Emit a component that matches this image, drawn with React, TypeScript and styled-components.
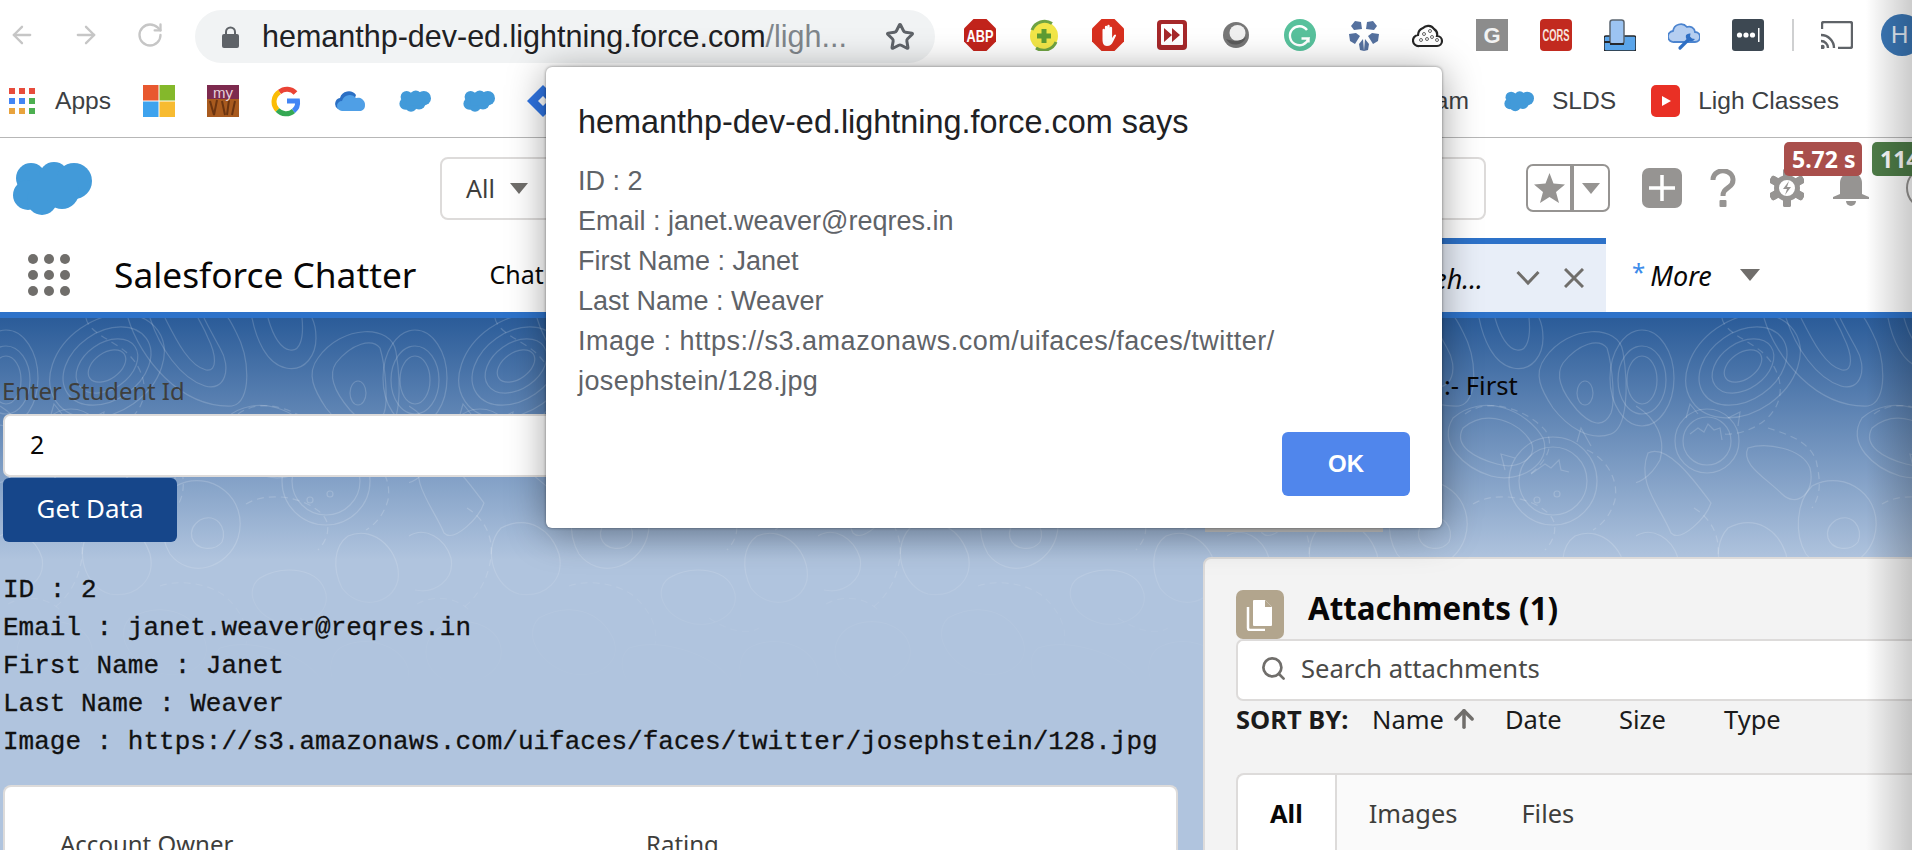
import React from 'react';
import styled, { createGlobalStyle } from 'styled-components';
import { ArrowLeft, ArrowRight, RotateCw, Star, Search, ArrowUp } from 'lucide-react';

const SF_FONT = '"Noto Sans", "Open Sans", sans-serif';
const CHROME_FONT = '"Liberation Sans", Arial, sans-serif';

const GlobalStyle = createGlobalStyle`
  html, body {
    margin: 0;
    padding: 0;
    background: #fff;
    overflow: hidden;
  }
  * {
    box-sizing: border-box;
  }
  svg {
    flex: none;
  }
`;

const Shell = styled.div`
  position: relative;
  width: 1912px;
  height: 850px;
  overflow: hidden;
  display: flex;
  flex-direction: column;
  background: #fff;
  font-family: ${SF_FONT};
`;

/* browser toolbar */
const Toolbar = styled.div`
  height: 70px;
  flex: none;
  display: flex;
  align-items: center;
  padding-left: 8px;
  color: #c6c6c6;
`;

const NavArrows = styled.div`
  display: flex;
  flex: none;
  gap: 36px;
`;

const Omnibox = styled.div`
  width: 740px;
  height: 53px;
  flex: none;
  margin-left: 31px;
  margin-top: 3px;
  border-radius: 27px;
  background: #f1f3f4;
  display: flex;
  align-items: center;
  padding: 0 20px 0 27px;
  color: #5f6368;
  font-family: ${CHROME_FONT};
`;

const Url = styled.span`
  margin-left: 23px;
  font-size: 30.5px;
  color: #202124;
  flex: 1;
  white-space: nowrap;
`;

const UrlRest = styled.span`
  color: #80868b;
`;

const Extensions = styled.div`
  display: flex;
  flex: none;
  gap: 32px;
  margin-left: 29px;
`;

const ToolbarSep = styled.div`
  width: 2px;
  height: 32px;
  flex: none;
  margin-left: 28px;
  background: #cfd0d1;
`;

const CastWrap = styled.div`
  margin-left: 27px;
  flex: none;
  display: flex;
`;

const ProfileBubble = styled.div`
  width: 42px;
  height: 42px;
  margin-left: 28px;
  flex: none;
  border-radius: 50%;
  background: #3b78b8;
  color: #e8f0fa;
  font-family: ${CHROME_FONT};
  font-size: 24px;
  display: flex;
  align-items: center;
  padding-left: 10px;
`;

/* bookmarks */
const Bookmarks = styled.div`
  height: 68px;
  flex: none;
  display: flex;
  align-items: center;
  padding: 0 73px 6px 9px;
  border-bottom: 1px solid #b7b7b7;
  font-family: ${CHROME_FONT};
  font-size: 24.6px;
  color: #3c4043;
`;

const BookmarkGroup = styled.div`
  display: flex;
  align-items: center;
  gap: 32px;
`;

const AppsLink = styled.div`
  display: flex;
  align-items: center;
  gap: 20px;
`;

const BookmarkRight = styled.div`
  margin-left: auto;
  display: flex;
  align-items: center;
  gap: 18px;
`;

const BookmarkLabel = styled.span<{ $after?: number }>`
  margin-right: ${p => p.$after ?? 0}px;
`;

/* salesforce global header */
const GlobalHeader = styled.div`
  height: 100px;
  flex: none;
  display: flex;
  align-items: center;
  padding-left: 12px;
`;

const GlobalSearch = styled.div`
  width: 1046px;
  height: 63px;
  flex: none;
  margin-left: 348px;
  border: 2px solid #dddbda;
  border-radius: 8px;
  display: flex;
  align-items: center;
  padding-left: 24px;
  font-size: 25px;
  color: #3e3e3c;
  gap: 15px;
`;

const Caret = styled.div<{ $w: number; $color?: string }>`
  width: 0;
  height: 0;
  border-left: ${p => p.$w / 2}px solid transparent;
  border-right: ${p => p.$w / 2}px solid transparent;
  border-top: ${p => p.$w * 0.62}px solid ${p => p.$color ?? '#706e6b'};
`;

const FavoriteGroup = styled.div`
  width: 84px;
  height: 48px;
  flex: none;
  margin-left: 40px;
  border: 2px solid #969492;
  border-radius: 7px;
  display: flex;
  align-items: center;
`;

const FavoriteStar = styled.div`
  width: 46px;
  height: 100%;
  display: flex;
  align-items: center;
  justify-content: center;
  border-right: 4px solid #969492;
`;

const FavoriteCaret = styled.div`
  flex: 1;
  display: flex;
  justify-content: center;
`;

const HeaderIcons = styled.div`
  display: flex;
  flex: none;
  align-items: center;
  margin-left: 32px;
`;

const HeaderIcon = styled.div<{ $after: number }>`
  display: flex;
  flex: none;
  margin-right: ${p => p.$after}px;
`;

const UserCircle = styled.div`
  width: 44px;
  height: 44px;
  flex: none;
  border-radius: 50%;
  border: 2px solid #969492;
`;

const PerfBadge = styled.div<{ $left: number; $bg: string; $w: number }>`
  position: absolute;
  top: 142px;
  left: ${p => p.$left}px;
  width: ${p => p.$w}px;
  height: 34px;
  border-radius: 5px;
  background: ${p => p.$bg};
  color: #fff;
  font-size: 23px;
  font-weight: 700;
  line-height: 34px;
  padding-left: 8px;
  white-space: nowrap;
  overflow: hidden;
`;

/* app nav */
const AppNav = styled.div`
  height: 80px;
  flex: none;
  display: flex;
  border-bottom: 6px solid #2d72c9;
  padding-left: 28px;
`;

const Waffle = styled.div`
  width: 42px;
  height: 42px;
  margin-top: 16px;
  display: grid;
  grid-template-columns: repeat(3, 10px);
  grid-auto-rows: 10px;
  justify-content: space-between;
  align-content: space-between;
`;

const WaffleDot = styled.span`
  border-radius: 50%;
  background: #706e6b;
`;

const AppName = styled.div`
  margin-left: 44px;
  font-size: 35.3px;
  line-height: 72px;
  color: #080707;
  white-space: nowrap;
`;

const NavLink = styled.div`
  margin-left: 73px;
  font-size: 25px;
  line-height: 72px;
  color: #080707;
  flex: 1;
`;

const ActiveTab = styled.div`
  width: 206px;
  flex: none;
  border-top: 6px solid #2d72c9;
  background: #e8eef8;
  display: flex;
  align-items: center;
  font-size: 27px;
  font-style: italic;
  color: #080707;
`;

const TabText = styled.span`
  width: 83px;
  text-align: right;
  white-space: nowrap;
`;

const TabActions = styled.div`
  display: flex;
  align-items: center;
  margin-left: 33px;
  gap: 24px;
`;

const MoreTab = styled.div`
  width: 306px;
  flex: none;
  display: flex;
  align-items: center;
  padding-left: 26px;
  font-size: 27px;
  font-style: italic;
  color: #080707;
`;

const MoreStar = styled.span`
  color: #3b8bea;
  font-size: 24px;
  margin-right: 5px;
  margin-top: -8px;
  font-style: normal;
`;

const MoreCaret = styled.div`
  margin-left: 28px;
`;

/* page */
const Page = styled.div`
  position: relative;
  flex: 1;
  min-height: 0;
  display: grid;
  grid-template-columns: 1182px 1fr;
  background: linear-gradient(180deg, #2b5c99 0, #b0c4de 242px, #b0c4de 100%);
`;

const Contours = styled.svg`
  position: absolute;
  left: 0;
  top: 0;
  width: 100%;
  height: 400px;
  -webkit-mask-image: linear-gradient(180deg, #000 0, #000 230px, rgba(0, 0, 0, 0.35) 290px, transparent 390px);
  mask-image: linear-gradient(180deg, #000 0, #000 230px, rgba(0, 0, 0, 0.35) 290px, transparent 390px);
`;

const LeftColumn = styled.div`
  position: relative;
  padding: 58px 4px 0 3px;
  min-width: 0;
`;

const FieldLabel = styled.div`
  font-size: 23.8px;
  line-height: 30px;
  margin-left: -1px;
  color: #3e3e3c;
`;

const StudentInput = styled.div`
  height: 63px;
  width: 1000px;
  margin-top: 8px;
  border: 2px solid #dddbda;
  border-radius: 7px;
  background: #fff;
  padding-left: 25px;
  font-size: 25px;
  line-height: 57px;
  color: #080707;
`;

const GetDataButton = styled.div`
  width: 174px;
  height: 64px;
  margin-top: 1px;
  border-radius: 6px;
  background: #16468a;
  color: #fff;
  font-size: 25.9px;
  line-height: 60px;
  text-align: center;
`;

const ResultBlock = styled.div`
  margin-top: 29px;
  font-family: "Liberation Mono", "Courier New", monospace;
  font-size: 26px;
  line-height: 38px;
  color: #111;
  -webkit-text-stroke: 0.3px #111;
`;

const ResultLine = styled.div`
  white-space: nowrap;
`;

const AccountCard = styled.div`
  margin-top: 24px;
  height: 300px;
  border: 2px solid #dddbda;
  border-bottom: none;
  border-radius: 8px 8px 0 0;
  background: #fff;
  padding: 40px 55px 0;
  display: grid;
  grid-template-columns: 586px 1fr;
  font-size: 24px;
  line-height: 34px;
  color: #3e3e3c;
`;

const RightColumn = styled.div`
  position: relative;
  padding: 53px 0 0 21px;
  min-width: 0;
`;

const FieldHint = styled.div`
  margin-left: 241px;
  font-size: 25.6px;
  line-height: 30px;
  color: #080707;
`;

const GhostBox = styled.div`
  width: 178px;
  height: 62px;
  margin: 69px 0 0 2px;
  border-bottom: 4px solid #c4c4c4;
`;

const AttachmentsPanel = styled.div`
  margin-top: 25px;
  width: 760px;
  height: 300px;
  border: 2px solid #dddbda;
  border-radius: 8px 0 0 0;
  background: #f3f3f3;
  padding: 31px 0 0 31px;
`;

const PanelHeader = styled.div`
  display: flex;
  align-items: flex-start;
  gap: 24px;
`;

const FileBadge = styled.div`
  width: 48px;
  height: 49px;
  border-radius: 7px;
  background: #b2a58d;
  display: flex;
  align-items: center;
  justify-content: center;
`;

const PanelTitle = styled.div`
  font-size: 31.3px;
  font-weight: 700;
  line-height: 36px;
  color: #080707;
`;

const AttachmentSearch = styled.div`
  height: 62px;
  border: 2px solid #dddbda;
  border-right: none;
  border-radius: 7px 0 0 7px;
  background: #fff;
  display: flex;
  align-items: center;
  gap: 14px;
  padding: 0 0 3px 22px;
  font-size: 25.6px;
  color: #4a4a48;
`;

const SortRow = styled.div`
  height: 40px;
  display: flex;
  align-items: center;
  padding-bottom: 4px;
  font-size: 25.5px;
  color: #1b1b1b;
`;

const SortLabel = styled.span`
  font-weight: 700;
  width: 136px;
`;

const SortOption = styled.span<{ $w: number }>`
  width: ${p => p.$w}px;
  display: flex;
  align-items: center;
  gap: 6px;
`;

const TabsBox = styled.div`
  margin-top: 32px;
  height: 140px;
  border: 2px solid #dddbda;
  border-right: none;
  border-radius: 8px 0 0 0;
  background: #fafafa;
  display: flex;
  font-size: 25.4px;
  color: #3e3e3c;
`;

const AttachTab = styled.div<{ $active?: boolean }>`
  padding: 0 32px;
  line-height: 76px;
  ${p =>
    p.$active &&
    `
    background: #fff;
    font-weight: 700;
    color: #080707;
    border-right: 2px solid #dddbda;
    border-radius: 8px 0 0 0;
  `}
`;

/* alert */
const AlertDialog = styled.div`
  position: absolute;
  left: 546px;
  top: 67px;
  width: 896px;
  height: 461px;
  border-radius: 6px;
  background: #fff;
  box-shadow: 0 0 3px rgba(0, 0, 0, 0.45), 0 4px 38px rgba(0, 0, 0, 0.38);
  padding: 35px 32px 32px;
  display: flex;
  flex-direction: column;
  font-family: ${CHROME_FONT};
`;

const AlertTitle = styled.div`
  font-size: 32.4px;
  line-height: 40px;
  color: #202124;
  white-space: nowrap;
`;

const AlertBody = styled.div`
  margin-top: 19px;
  font-size: 27px;
  line-height: 40px;
  color: #5f6368;
`;

const AlertLine = styled.div<{ $track?: number }>`
  white-space: nowrap;
  letter-spacing: ${p => p.$track ?? 0}px;
`;

const OkButton = styled.div`
  margin-top: auto;
  align-self: flex-end;
  width: 128px;
  height: 64px;
  border-radius: 6px;
  background: #5086ec;
  color: #fff;
  font-size: 24px;
  font-weight: 700;
  line-height: 64px;
  text-align: center;
`;

const WindowEdge = styled.div`
  position: absolute;
  right: 0;
  top: 0;
  bottom: 0;
  width: 46px;
  background: linear-gradient(90deg, transparent, rgba(0, 0, 0, 0.2));
  pointer-events: none;
`;

/* drawings */
const ExtOctagon: React.FC<{ fill: string; children: React.ReactNode }> = ({ fill, children }) => (
  <svg width="32" height="32" viewBox="0 0 32 32">
    <polygon points="9.5,0 22.5,0 32,9.5 32,22.5 22.5,32 9.5,32 0,22.5 0,9.5" fill={fill} />
    {children}
  </svg>
);

const AbpIcon = () => (
  <ExtOctagon fill="#c1231b">
    <text
      x="16"
      y="22.5"
      textAnchor="middle"
      fontFamily={CHROME_FONT}
      fontWeight="700"
      fontSize="17"
      textLength="27"
      lengthAdjust="spacingAndGlyphs"
      fill="#fff"
    >
      ABP
    </text>
  </ExtOctagon>
);

const PlusRingIcon = () => (
  <svg width="32" height="32" viewBox="0 0 32 32">
    <circle cx="16" cy="17" r="14" fill="#f2e648" />
    <path d="M4 11a13.5 13.5 0 0 1 20-6.5M28 23a13.5 13.5 0 0 1-20 6" stroke="#6fa343" strokeWidth="3" fill="none" />
    <path d="M16 10v14M9 17h14" stroke="#5e9c33" strokeWidth="5" />
  </svg>
);

const HandIcon = () => (
  <ExtOctagon fill="#d8301f">
    <path
      d="M10.5 20V11a1.2 1.2 0 0 1 2.4 0v5V8a1.2 1.2 0 0 1 2.4 0v8V7a1.2 1.2 0 0 1 2.4 0v9V9a1.2 1.2 0 0 1 2.4 0v10l2-3c1-1.2 2.4-.2 1.8 1l-3 6c-1 2.2-2.5 4-6 4-3.500 0-4.400-3-4.400-7z"
      fill="#fff"
    />
  </ExtOctagon>
);

const ForwardIcon = () => (
  <svg width="32" height="32" viewBox="0 0 32 32">
    <rect x="1" y="1" width="30" height="30" rx="4" fill="#a6282a" />
    <rect x="5" y="5" width="22" height="21" rx="1" fill="#fff" />
    <path d="M8 9l8 7-8 7zM16 9l8 7-8 7z" fill="#a6282a" />
  </svg>
);

const OrbIcon = () => (
  <svg width="32" height="32" viewBox="0 0 32 32">
    <circle cx="16" cy="16" r="13" fill="#777" />
    <circle cx="17.500" cy="14" r="8" fill="#f0f0f0" />
    <path d="M6 20a11 11 0 0 0 20-2c-4 4-12 5-20 2z" fill="#5b5b5b" />
  </svg>
);

const GrammarlyIcon = () => (
  <svg width="32" height="32" viewBox="0 0 32 32">
    <circle cx="16" cy="16" r="16" fill="#58c19c" />
    <path d="M23 11a9.500 9.500 0 1 0 1.500 8.500h-7M24.500 19.500v4" stroke="#fff" strokeWidth="2.4" fill="none" />
  </svg>
);

const FlowerIcon = () => (
  <svg width="32" height="32" viewBox="0 0 32 32" fill="#55719f">
    <path d="M7 2l6 1 1 7-8 1-3-4zM25 2l-6 1-1 7 8 1 3-4zM1 15l7-1 4 3-5 8-5-3zM31 15l-7-1-4 3 5 8 5-3zM11 25l4-5 1 12-4-1zM21 25l-4-5-1 12 4-1z" />
  </svg>
);

const SearchCloudIcon = () => (
  <svg width="32" height="32" viewBox="0 0 32 32">
    <path
      d="M7 27a5.500 5.500 0 0 1-1-11 8 8 0 0 1 5-7 7 7 0 0 1 11 1 6.500 6.500 0 0 1 3 7 5 5 0 0 1 0 10z"
      fill="#fff"
      stroke="#262626"
      strokeWidth="2.200"
    />
    <g fill="none" stroke="#666" strokeWidth="1">
      <circle cx="12" cy="15" r="1.500" />
      <circle cx="18" cy="12" r="1.500" />
      <circle cx="9" cy="21" r="1.500" />
      <circle cx="15" cy="20" r="1.500" />
      <circle cx="20" cy="18" r="1.500" />
      <circle cx="25" cy="21" r="1.500" />
    </g>
  </svg>
);

const GreyGIcon = () => (
  <svg width="32" height="32" viewBox="0 0 32 32">
    <rect width="32" height="32" fill="#8c8c8c" />
    <text x="16" y="24" textAnchor="middle" fontFamily={CHROME_FONT} fontWeight="700" fontSize="22" fill="#f2f2f2">
      G
    </text>
  </svg>
);

const CorsIcon = () => (
  <svg width="32" height="32" viewBox="0 0 32 32">
    <rect width="32" height="32" rx="4" fill="#c22a1f" />
    <text
      x="16"
      y="22"
      textAnchor="middle"
      fontFamily={CHROME_FONT}
      fontWeight="700"
      fontSize="16"
      textLength="27"
      lengthAdjust="spacingAndGlyphs"
      fill="#f6e3dd"
    >
      CORS
    </text>
  </svg>
);

const DeviceIcon = () => (
  <svg width="32" height="32" viewBox="0 0 32 32">
    <rect x="0" y="17" width="32" height="15" rx="2" fill="#5aa5ea" stroke="#26282b" strokeWidth="1.500" />
    <rect x="6" y="1" width="14" height="24" rx="2.500" fill="#9cc4f2" stroke="#5b6570" strokeWidth="1.500" />
    <path d="M0 23h6M6 25h14" stroke="#26282b" strokeWidth="2" />
  </svg>
);

const WrenchCloudIcon = () => (
  <svg width="32" height="32" viewBox="0 0 32 32">
    <path
      d="M6 23a5.500 5.500 0 0 1-1-11 8 8 0 0 1 14-4 6 6 0 0 1 8 5 5 5 0 0 1 0 10z"
      fill="#b5cef0"
      stroke="#4c84cf"
      strokeWidth="1.800"
    />
    <path d="M12 29l8-8" stroke="#2f6fc4" strokeWidth="3.200" strokeLinecap="round" />
    <path d="M18 16a5 5 0 0 0 9 4l-3-.5-2-2 .5-3a5 5 0 0 0-4.500 1.500z" fill="#2f6fc4" />
  </svg>
);

const LastPassIcon = () => (
  <svg width="32" height="32" viewBox="0 0 32 32">
    <rect width="32" height="32" rx="3" fill="#3d4852" />
    <circle cx="7.500" cy="16" r="2.600" fill="#fff" />
    <circle cx="14" cy="16" r="2.600" fill="#fff" />
    <circle cx="20.500" cy="16" r="2.600" fill="#fff" />
    <rect x="26" y="9" width="1.500" height="14" fill="#fff" />
  </svg>
);

const CastIcon = () => (
  <svg width="32" height="28" viewBox="0 0 32 28" fill="none" stroke="#5f6368" strokeWidth="2.400">
    <path d="M1 8V3a2 2 0 0 1 2-2h26a2 2 0 0 1 2 2v22a2 2 0 0 1-2 2H17" />
    <path d="M0 14a13 13 0 0 1 13 13M0 20a7 7 0 0 1 7 7" />
    <circle cx="1.500" cy="26" r="1" fill="#5f6368" />
  </svg>
);

const LockIcon = () => (
  <svg width="17" height="22" viewBox="0 0 17 22" fill="#5f6368">
    <path d="M4 9V6a4.500 4.500 0 0 1 9 0v3" fill="none" stroke="#5f6368" strokeWidth="2" />
    <rect y="8" width="17" height="14" rx="2" />
  </svg>
);

const AppsGridIcon = () => {
  const colors = ['#e74c3c', '#e74c3c', '#e74c3c', '#4285f4', '#4285f4', '#4caf50', '#e8a33d', '#e8a33d', '#4caf50'];
  return (
    <svg width="26" height="26" viewBox="0 0 26 26">
      {colors.map((fill, i) => (
        <rect key={i} x={(i % 3) * 10} y={Math.floor(i / 3) * 10} width="6" height="6" fill={fill} />
      ))}
    </svg>
  );
};

const MicrosoftIcon = () => (
  <svg width="32" height="32" viewBox="0 0 32 32">
    <rect width="15.500" height="15.500" fill="#e8582f" />
    <rect x="16.500" width="15.500" height="15.500" fill="#84b82b" />
    <rect y="16.500" width="15.500" height="15.500" fill="#3ea3ee" />
    <rect x="16.500" y="16.500" width="15.500" height="15.500" fill="#f7bb31" />
  </svg>
);

const MyIcon = () => (
  <svg width="32" height="32" viewBox="0 0 32 32">
    <rect width="32" height="14" fill="#7d2a4e" />
    <rect y="14" width="32" height="18" fill="#a85a1e" />
    <path d="M3 16l4 14M10 15l-3 15M15 16l3 14M22 15l-2 15M28 16l-3 14" stroke="#6b3410" strokeWidth="2" />
    <text x="16" y="13" textAnchor="middle" fontFamily={CHROME_FONT} fontSize="15" fill="#e6cfd8">
      my
    </text>
  </svg>
);

const GoogleIcon = () => (
  <svg width="32" height="32" viewBox="0 0 32 32" fill="none" strokeWidth="5">
    <path d="M24.500 8a11.500 11.500 0 0 0-16-1" stroke="#ea4335" />
    <path d="M8.500 7a11.500 11.500 0 0 0-2 18" stroke="#fbbc05" />
    <path d="M6.500 25a11.500 11.500 0 0 0 16 1" stroke="#34a853" />
    <path d="M22.500 26a11 11 0 0 0 4-10H16" stroke="#4285f4" />
  </svg>
);

const OneDriveIcon = () => (
  <svg width="32" height="32" viewBox="0 0 32 32">
    <path d="M3 24a6 6 0 0 1 2-11 9 9 0 0 1 16-3l-5 14z" fill="#2a6fc4" />
    <path d="M7 26a5 5 0 0 1 0-10 8 8 0 0 1 14-3 7 7 0 0 1 9 7 6 6 0 0 1-4 6z" fill="#4f9fe6" />
  </svg>
);

const Cloud: React.FC<{ w: number; h: number }> = ({ w, h }) => (
  <svg width={w} height={h} viewBox="0 0 80 56" fill="#429ad9">
    <circle cx="19" cy="18" r="15" />
    <circle cx="42" cy="17" r="15" />
    <circle cx="62" cy="21" r="18" />
    <circle cx="16" cy="35" r="15" />
    <circle cx="30" cy="40" r="15" />
    <circle cx="50" cy="32" r="17" />
    <rect x="18" y="15" width="40" height="25" />
  </svg>
);

const JiraIcon = () => (
  <svg width="32" height="32" viewBox="0 0 32 32">
    <polygon points="16,0 32,16 16,32 0,16" fill="#2f74e2" />
    <polygon points="16,11 21,16 16,21 11,16" fill="#fff" />
  </svg>
);

const YoutubeIcon = () => (
  <svg width="29" height="32" viewBox="0 0 29 32">
    <rect width="29" height="32" rx="5" fill="#e93025" />
    <polygon points="11,11 20,16 11,21" fill="#fff" />
  </svg>
);

const QuestionIcon = () => (
  <svg width="26" height="38" viewBox="0 0 26 38" fill="none">
    <path d="M3 11a10 9 0 1 1 16 7c-4 3-6 4-6 9" stroke="#969492" strokeWidth="5" />
    <rect x="9.500" y="31" width="7" height="7" rx="1" fill="#969492" />
  </svg>
);

const PlusIcon = () => (
  <svg width="40" height="40" viewBox="0 0 40 40">
    <rect width="40" height="40" rx="7" fill="#969492" />
    <path d="M20 7v26M7 20h26" stroke="#fff" strokeWidth="3.500" />
  </svg>
);

const GearIcon = () => (
  <svg width="34" height="38" viewBox="0 0 34 38">
    <g fill="#969492">
      {[0, 60, 120, 180, 240, 300].map(a => (
        <rect key={a} x="13" y="0" width="8" height="38" rx="2" transform={`rotate(${a} 17 19)`} />
      ))}
    </g>
    <circle cx="17" cy="19" r="10.500" fill="#fff" stroke="#969492" strokeWidth="5" />
    <path d="M19 12l-6 8h4l-2 6 6-8h-4z" fill="#969492" />
  </svg>
);

const BellIcon = () => (
  <svg width="38" height="36" viewBox="0 0 38 36" fill="#969492">
    <path d="M8 24V13a11 11 0 0 1 22 0v11l7 3v2H1v-2z" />
    <path d="M14 31h10a5 5 0 0 1-10 0z" />
  </svg>
);

const ChevronDown = () => (
  <svg width="24" height="16" viewBox="0 0 24 16" fill="none">
    <path d="M1.500 2L12 13 22.500 2" stroke="#706e6b" strokeWidth="3" />
  </svg>
);

const CloseX = () => (
  <svg width="20" height="20" viewBox="0 0 20 20" fill="none">
    <path d="M1 1l18 18M19 1L1 19" stroke="#706e6b" strokeWidth="3" />
  </svg>
);

const FilesIcon = () => (
  <svg width="28" height="32" viewBox="0 0 28 32" fill="#fff">
    <path d="M8 1h11l7 7v18a1 1 0 0 1-1 1H8a1 1 0 0 1-1-1V2a1 1 0 0 1 1-1z" />
    <path d="M19 1v7h7" fill="#b2a58d" />
    <path d="M2 8v21a2 2 0 0 0 2 2h15" fill="none" stroke="#fff" strokeWidth="2.500" />
  </svg>
);

// one tile of the topographic wallpaper, 409 wide
const CONTOUR_SOLID = [
  'M336 45C352 25 372 20 380 30C386 50 388 85 384 95C376 112 362 105 350 92C338 78 326 60 336 45Z',
  'M318 40C342 6 392 6 396 34C402 70 400 110 384 116C362 124 340 108 326 90C314 72 306 56 318 40Z',
  'M12 135C32 125 60 165 75 185C70 200 45 225 35 215C25 190 0 165 12 135Z',
  'M150 0C160 30 180 60 205 68C225 74 232 50 220 30C210 12 206 4 204 0',
  'M165 0C178 26 190 48 206 52C218 54 216 36 208 20C204 10 200 4 198 0',
  'M128 0C140 40 180 90 232 88C252 84 250 40 236 14C232 6 230 2 228 0',
  'M252 0C256 20 266 46 286 50C306 54 316 36 316 20C316 10 314 4 312 0',
  'M268 0C272 14 278 30 290 32C300 34 304 20 302 0',
  'M236 110C260 90 292 104 304 124C312 140 290 152 270 146C248 140 226 128 236 110Z',
  'M226 100C256 74 300 92 316 120C326 146 292 166 264 158C238 150 210 126 226 100Z',
  'M0 88C20 100 30 120 24 142C14 160 0 168 -8 164',
  'M112 130C130 124 166 130 174 150C180 176 160 190 146 176C130 160 104 146 112 130Z',
  'M176 168C210 150 250 180 238 220C228 250 190 262 170 236C158 216 160 184 176 168Z',
  'M200 202C216 194 228 210 222 224C214 234 196 232 192 220C190 212 194 206 200 202Z',
  'M348 218C376 206 402 236 398 262C392 288 358 292 342 270C332 250 334 228 348 218Z',
  'M92 210C120 196 142 212 150 236C156 262 136 280 110 276C86 270 72 232 92 210Z',
  'M0 218C16 208 36 220 42 240C46 262 26 276 6 272',
  'M260 260C284 246 320 250 326 276C330 300 298 312 278 304C254 296 244 272 260 260Z',
  'M130 300C160 284 190 292 204 320C214 344 190 360 164 356C134 350 112 318 130 300Z',
  'M30 310C54 296 88 306 92 330C96 356 60 372 36 362C14 352 10 324 30 310Z',
  'M220 330C250 320 300 334 320 360C330 380 290 396 260 390C226 384 200 348 220 330Z',
  'M340 330C364 316 400 326 408 350C412 378 380 392 356 386C332 378 322 344 340 330Z',
];

const CONTOUR_DASHED = [
  'M86 0C88 14 112 22 126 34C144 50 150 74 138 92C128 108 104 118 86 116',
  'M132 110C150 116 172 122 180 142C184 160 186 176 176 190',
  'M238 96C262 78 300 92 318 112C330 128 316 148 300 158',
  'M246 186C270 172 306 180 322 196C332 206 328 222 318 232',
  'M58 190C74 200 84 216 82 238C80 260 68 280 54 290',
  'M160 268C176 262 204 264 222 276C238 288 250 308 246 326',
  'M360 132C378 140 392 160 388 182C384 196 376 206 366 212',
  'M8 286C26 276 48 280 60 292',
  'M300 300C318 312 338 318 350 310',
];

const ContourTile = () => (
  <g fill="none" stroke="#fff" strokeOpacity="0.17" strokeWidth="1.200">
    {[
      [21, 13],
      [34, 23],
      [48, 34],
      [62, 46],
    ].map(([rx, ry]) => (
      <ellipse key={rx} cx="107" cy="48" rx={rx} ry={ry} transform="rotate(-35 107 48)" />
    ))}
    {[0, 409].map(x => (
      <g key={x}>
        <ellipse cx={x + 6} cy="62" rx="15" ry="24" />
        <ellipse cx={x + 6} cy="62" rx="24" ry="34" />
        <ellipse cx={x + 6} cy="60" rx="32" ry="48" />
      </g>
    ))}
    <ellipse cx="358" cy="75" rx="8" ry="12" />
    <circle cx="71" cy="123" r="32" />
    <circle cx="71" cy="123" r="24" />
    <path d="M50 100l4-14 8 10M92 100l12-6-2 14M54 116l8-6 6 4 4-8 6 6 6-2 2 12" />
    <circle cx="326" cy="163" r="44" />
    <circle cx="326" cy="163" r="34" />
    <path d="M288 140l-14-4 4 16M350 124l4-14 10 18M304 156l14-10 6 4 8-8 2 10 8 2" />
    <circle cx="330" cy="176" r="3" />
    <circle cx="310" cy="182" r="3" />
    {CONTOUR_SOLID.map(d => (
      <path key={d} d={d} />
    ))}
    {CONTOUR_DASHED.map(d => (
      <path key={d} d={d} strokeDasharray="7 5" />
    ))}
  </g>
);

const App: React.FC = () => {
  const extensions = [
    AbpIcon,
    PlusRingIcon,
    HandIcon,
    ForwardIcon,
    OrbIcon,
    GrammarlyIcon,
    FlowerIcon,
    SearchCloudIcon,
    GreyGIcon,
    CorsIcon,
    DeviceIcon,
    WrenchCloudIcon,
    LastPassIcon,
  ];
  const result = [
    'ID : 2',
    'Email : janet.weaver@reqres.in',
    'First Name : Janet',
    'Last Name : Weaver',
    'Image : https://s3.amazonaws.com/uifaces/faces/twitter/josephstein/128.jpg',
  ];

  return (
    <Shell>
      <GlobalStyle />
      <Toolbar>
        <NavArrows>
          <ArrowLeft size={28} strokeWidth={2} />
          <ArrowRight size={28} strokeWidth={2} />
          <RotateCw size={28} strokeWidth={2} />
        </NavArrows>
        <Omnibox>
          <LockIcon />
          <Url>
            hemanthp-dev-ed.lightning.force.com<UrlRest>/ligh...</UrlRest>
          </Url>
          <Star size={30} strokeWidth={2.4} />
        </Omnibox>
        <Extensions>
          {extensions.map((Icon, i) => (
            <Icon key={i} />
          ))}
        </Extensions>
        <ToolbarSep />
        <CastWrap>
          <CastIcon />
        </CastWrap>
        <ProfileBubble>H</ProfileBubble>
      </Toolbar>

      <Bookmarks>
        <BookmarkGroup>
          <AppsLink>
            <AppsGridIcon />
            Apps
          </AppsLink>
          <MicrosoftIcon />
          <MyIcon />
          <GoogleIcon />
          <OneDriveIcon />
          <Cloud w={32} h={26} />
          <Cloud w={32} h={26} />
          <JiraIcon />
        </BookmarkGroup>
        <BookmarkRight>
          <BookmarkLabel $after={17}>am</BookmarkLabel>
          <Cloud w={30} h={28} />
          <BookmarkLabel $after={17}>SLDS</BookmarkLabel>
          <YoutubeIcon />
          <BookmarkLabel>Ligh Classes</BookmarkLabel>
        </BookmarkRight>
      </Bookmarks>

      <GlobalHeader>
        <Cloud w={80} h={56} />
        <GlobalSearch>
          All
          <Caret $w={18} />
        </GlobalSearch>
        <FavoriteGroup>
          <FavoriteStar>
            <svg width="31" height="30" viewBox="0 0 31 30">
              <polygon points="15.5,0 19.500,10.500 31,11.500 22,19 25,30 15.500,24 6,30 9,19 0,11.500 11.500,10.500" fill="#969492" />
            </svg>
          </FavoriteStar>
          <FavoriteCaret>
            <Caret $w={18} $color="#969492" />
          </FavoriteCaret>
        </FavoriteGroup>
        <HeaderIcons>
          <HeaderIcon $after={28}>
            <PlusIcon />
          </HeaderIcon>
          <HeaderIcon $after={34}>
            <QuestionIcon />
          </HeaderIcon>
          <HeaderIcon $after={28}>
            <GearIcon />
          </HeaderIcon>
          <HeaderIcon $after={36}>
            <BellIcon />
          </HeaderIcon>
          <UserCircle />
        </HeaderIcons>
      </GlobalHeader>
      <PerfBadge $left={1784} $w={78} $bg="#a94f4c">
        5.72 s
      </PerfBadge>
      <PerfBadge $left={1872} $w={60} $bg="#4e7d48">
        114
      </PerfBadge>

      <AppNav>
        <Waffle>
          {Array.from({ length: 9 }, (_, i) => (
            <WaffleDot key={i} />
          ))}
        </Waffle>
        <AppName>Salesforce Chatter</AppName>
        <NavLink>Chat</NavLink>
        <ActiveTab>
          <TabText>eh...</TabText>
          <TabActions>
            <ChevronDown />
            <CloseX />
          </TabActions>
        </ActiveTab>
        <MoreTab>
          <MoreStar>*</MoreStar>
          More
          <MoreCaret>
            <Caret $w={20} />
          </MoreCaret>
        </MoreTab>
      </AppNav>

      <Page>
        <Contours aria-hidden="true">
          <defs>
            <pattern id="topo" width="409" height="400" patternUnits="userSpaceOnUse">
              <ContourTile />
            </pattern>
          </defs>
          <rect width="100%" height="100%" fill="url(#topo)" />
        </Contours>

        <LeftColumn>
          <FieldLabel>Enter Student Id</FieldLabel>
          <StudentInput>2</StudentInput>
          <GetDataButton>Get Data</GetDataButton>
          <ResultBlock>
            {result.map(line => (
              <ResultLine key={line}>{line}</ResultLine>
            ))}
          </ResultBlock>
          <AccountCard>
            <span>Account Owner</span>
            <span>Rating</span>
          </AccountCard>
        </LeftColumn>

        <RightColumn>
          <FieldHint>:- First</FieldHint>
          <GhostBox />
          <AttachmentsPanel>
            <PanelHeader>
              <FileBadge>
                <FilesIcon />
              </FileBadge>
              <PanelTitle>Attachments (1)</PanelTitle>
            </PanelHeader>
            <AttachmentSearch>
              <Search size={27} color="#706e6b" strokeWidth={2.4} />
              Search attachments
            </AttachmentSearch>
            <SortRow>
              <SortLabel>SORT BY:</SortLabel>
              <SortOption $w={133}>
                Name
                <ArrowUp size={28} color="#706e6b" strokeWidth={3} />
              </SortOption>
              <SortOption $w={114}>Date</SortOption>
              <SortOption $w={105}>Size</SortOption>
              <SortOption $w={70}>Type</SortOption>
            </SortRow>
            <TabsBox>
              <AttachTab $active>All</AttachTab>
              <AttachTab>Images</AttachTab>
              <AttachTab>Files</AttachTab>
            </TabsBox>
          </AttachmentsPanel>
        </RightColumn>
      </Page>

      <WindowEdge />

      <AlertDialog>
        <AlertTitle>hemanthp-dev-ed.lightning.force.com says</AlertTitle>
        <AlertBody>
          <AlertLine>ID : 2</AlertLine>
          <AlertLine>Email : janet.weaver@reqres.in</AlertLine>
          <AlertLine>First Name : Janet</AlertLine>
          <AlertLine>Last Name : Weaver</AlertLine>
          <AlertLine $track={0.5}>Image : https://s3.amazonaws.com/uifaces/faces/twitter/</AlertLine>
          <AlertLine $track={0.4}>josephstein/128.jpg</AlertLine>
        </AlertBody>
        <OkButton>OK</OkButton>
      </AlertDialog>
    </Shell>
  );
};

export default App;
